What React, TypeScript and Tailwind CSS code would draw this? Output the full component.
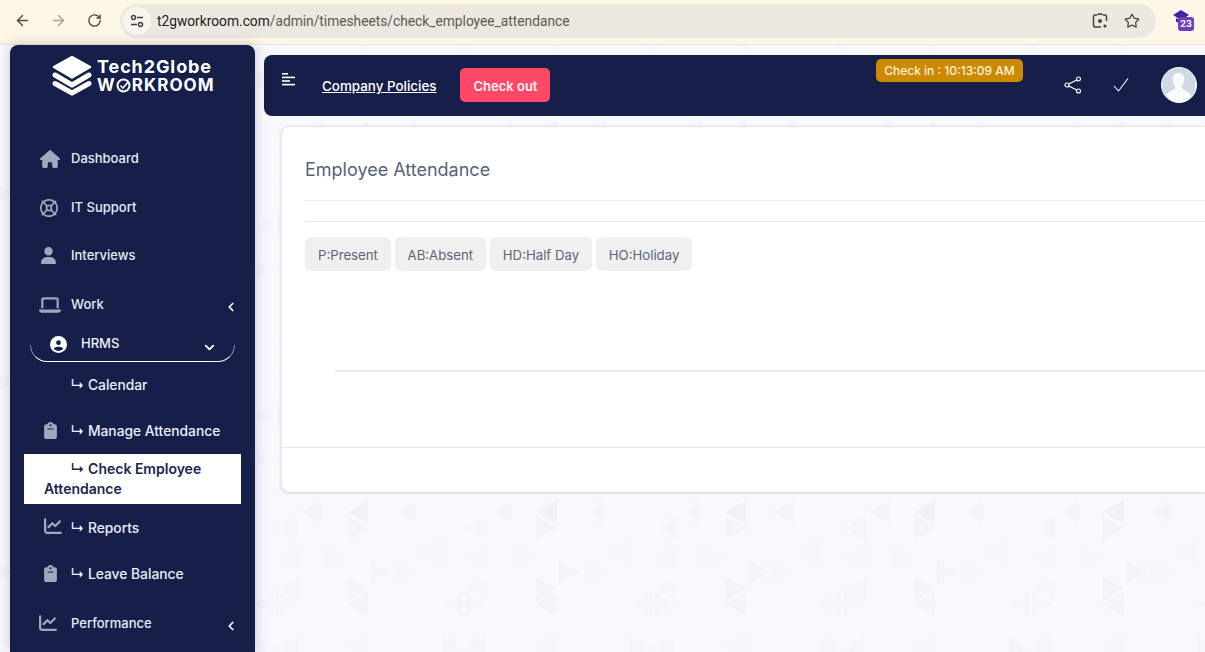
import React from "react";
import { ArrowLeft, ArrowRight, RotateCw, Star, ChevronLeft, ChevronDown } from "lucide-react";
import { FaHouse, FaUser, FaLaptop, FaCircleUser, FaClipboard, FaChartLine, FaRegLifeRing } from "react-icons/fa6";

const ICON = "text-[#a1a7bd]";

function Row({ icon, label, h, chevron }: { icon: React.ReactNode; label: string; h: string; chevron?: boolean }) {
  return (
    <div className={`flex items-center pl-[29px] pr-[17px] text-[13px] font-medium text-[#e8eaf2] ${h}`}>
      <span className={`flex w-[32px] shrink-0 items-center ${ICON}`}>{icon}</span>
      <span className="flex-1">{label}</span>
      {chevron && <ChevronLeft size={14} strokeWidth={3} className="mt-[5px] text-white" />}
    </div>
  );
}

function SubRow({ icon, label, h }: { icon?: React.ReactNode; label: string; h: string }) {
  return (
    <div className={`flex items-center pl-[33px] text-[13.8px] font-medium text-[#eceef5] ${h}`}>
      <span className={`flex w-[27.5px] shrink-0 items-center ${ICON}`}>{icon}</span>
      <span className="pt-[2px]">↳ {label}</span>
    </div>
  );
}

function Logo() {
  return (
    <div className="flex h-[89px] items-start pl-[42px] pt-[10px]">
      <svg width="40" height="41" viewBox="0 0 40 41" className="shrink-0">
        <path d="M20 2 L38 12 L20 22.5 L2 12 Z" fill="#fff" stroke="#fff" strokeWidth="2.5" strokeLinejoin="round" />
        <path d="M3 20 L20 30 L37 20" fill="none" stroke="#fff" strokeWidth="5" strokeLinecap="round" strokeLinejoin="round" />
        <path d="M3 28.5 L20 38 L37 28.5" fill="none" stroke="#fff" strokeWidth="5" strokeLinecap="round" strokeLinejoin="round" />
      </svg>
      <div className="ml-[5px] mt-[2px] font-bold text-white">
        <div className="text-[18px] leading-[20px] tracking-[0.9px]">Tech2Globe</div>
        <div className="flex items-center text-[17px] leading-[17px] tracking-[1.05px]">
          W
          <svg width="15" height="15" viewBox="0 0 15 15" className="mx-[0.5px]">
            <circle cx="7.5" cy="7.5" r="6" fill="none" stroke="#fff" strokeWidth="2" />
            <path d="M4.5 7.5 L7 10 L12.5 3.5" fill="none" stroke="#fff" strokeWidth="1.6" />
          </svg>
          RKROOM
        </div>
      </div>
    </div>
  );
}

function Sidebar() {
  return (
    <aside className="relative z-10 w-[245px] shrink-0 overflow-hidden rounded-t-[8px] bg-[#151f4a]">
      <Logo />
      <Row h="h-[49px]" label="Dashboard" icon={<FaHouse size={20} className="ml-[1px]" />} />
      <Row h="h-[49px]" label="IT Support" icon={<FaRegLifeRing size={18} className="ml-[1px]" />} />
      <Row h="h-[47px]" label="Interviews" icon={<FaUser size={17} className="ml-[1px]" />} />
      <Row h="h-[50px] pt-[1px]" label="Work" chevron icon={<FaLaptop size={22} />} />
      <div className="relative ml-[20px] flex h-[33px] w-[205px] items-center pb-[3px] pl-[20px] pr-[18px] text-[13px] font-medium text-[#f0f1f6]">
        <FaCircleUser size={17} className="text-white" />
        <span className="ml-[14px] flex-1">HRMS</span>
        <ChevronDown size={15} strokeWidth={3} className="mt-[6px] text-white" />
        <div className="absolute inset-x-0 bottom-0 h-[17px] rounded-b-[17px] border-x border-b border-white [border-left-color:#ffffff80] [border-right-color:#ffffff80]" />
      </div>
      <SubRow h="h-[45px]" label="Calendar" />
      <SubRow h="h-[47px]" label="Manage Attendance" icon={<FaClipboard size={17} className="-ml-[1px]" />} />
      <div className="ml-[14px] h-[50px] w-[217px] bg-white py-[5px] pl-[20px] pr-[10px] text-[14px] font-semibold leading-[20px] text-[#1c2650] [text-indent:26.5px]">
        ↳ Check Employee Attendance
      </div>
      <SubRow h="h-[47px]" label="Reports" icon={<FaChartLine size={18} className="ml-[1px] -mt-[3px]" />} />
      <SubRow h="h-[45px]" label="Leave Balance" icon={<FaClipboard size={17} className="-ml-[1px]" />} />
      <Row h="h-[55px]" label="Performance" chevron icon={<FaChartLine size={18} className="-mt-[2px]" />} />
    </aside>
  );
}

function Toolbar() {
  return (
    <header className="flex h-[45px] shrink-0 items-center border-b border-[#eee6d6] bg-[#fef7e8] pb-[3px]">
      <ArrowLeft size={17} strokeWidth={2} className="ml-[14px] text-[#4c4a42]" />
      <ArrowRight size={17} strokeWidth={2} className="ml-[19px] text-[#a5a298]" />
      <RotateCw size={15} strokeWidth={2.2} className="ml-[20px] text-[#4c4a42]" />
      <div className="ml-[18px] flex h-[34px] w-[1036px] items-center rounded-full bg-[#ece8e0]">
        <div className="ml-[3px] flex h-[28px] w-[28px] items-center justify-center rounded-full bg-[#f8f5ee]">
          <svg width="14" height="14" viewBox="0 0 14 14" fill="none" stroke="#3f3d38" strokeWidth="1.4">
            <circle cx="3.5" cy="3.5" r="2" />
            <path d="M7 3.5 H13 M1 10.5 H7" />
            <circle cx="10.5" cy="10.5" r="2" />
          </svg>
        </div>
        <span className="ml-[6px] mt-[2px] flex-1 font-['Roboto'] text-[13.75px] text-[#5b5a55]">
          <span className="text-[#22211e]">t2gworkroom.com</span>/admin/timesheets/check_employee_attendance
        </span>
        <svg width="16" height="16" viewBox="0 0 16 16" fill="none" stroke="#45433d" strokeWidth="1.5" className="mr-[16px]">
          <path d="M5 2 H3 Q1.5 2 1.5 3.5 V12 Q1.5 14 3 14 H5 M11 2 H13 Q14.5 2 14.5 3.5 V8 M9 14 H5" />
          <circle cx="8" cy="8" r="2" fill="#45433d" stroke="none" />
          <circle cx="13" cy="13" r="1.6" fill="#45433d" stroke="none" />
          <path d="M5.5 2 L6.5 1 H9.5 L10.5 2" />
        </svg>
        <Star size={16} strokeWidth={1.8} className="mr-[16px] text-[#45433d]" />
      </div>
      <div className="relative ml-[17px] h-[24px] w-[24px]">
        <svg width="16" height="14" viewBox="0 0 16 14" className="absolute left-0 top-[1px]">
          <path d="M8 0 L16 5 L8 10 L0 5 Z M3 8 L8 11 L13 8 V12 H3 Z" fill="#4b1fa3" />
        </svg>
        <span className="absolute left-[5px] top-[8px] flex h-[14px] w-[16px] items-center justify-center rounded-[3px] bg-[#6a3fc0] text-[9px] font-bold leading-none text-white">
          23
        </span>
      </div>
    </header>
  );
}

function Navbar() {
  return (
    <div className="flex h-[61px] items-start rounded-l-[8px] bg-[#151f4a]">
      <svg width="14" height="13" viewBox="0 0 14 13" className="ml-[18px] mt-[18px]" fill="#fff">
        <rect x="0" y="0" width="6" height="1.6" />
        <rect x="0" y="3.6" width="13" height="1.6" />
        <rect x="0" y="7.2" width="8" height="1.6" />
        <rect x="0" y="10.8" width="13" height="1.6" />
      </svg>
      <a className="ml-[26px] mt-[21px] text-[13.4px] font-medium leading-[20px] text-white underline">Company Policies</a>
      <button className="ml-[24px] mt-[13px] flex h-[34px] w-[90px] items-center justify-center rounded-[5px] bg-[#ff4766] pt-[3px] text-[13px] font-semibold text-[#fdf3f3]">
        Check out
      </button>
      <div className="flex-1" />
      <span className="mt-[4px] flex h-[23px] w-[147px] items-center justify-center rounded-[5px] bg-[#cc8a00] text-[12px] font-medium text-[#fdf3dc]">
        Check in : 10:13:09 AM
      </span>
      <svg width="18" height="18" viewBox="0 0 18 18" fill="none" stroke="#fff" strokeWidth="1.2" className="ml-[41px] mt-[21px]">
        <circle cx="14.5" cy="3" r="2" />
        <circle cx="3" cy="9" r="2" />
        <circle cx="14.5" cy="15" r="2" />
        <path d="M4.8 8 L12.7 4 M4.8 10 L12.7 14" />
      </svg>
      <svg width="18" height="18" viewBox="0 0 18 18" fill="none" stroke="#fff" strokeWidth="1.1" className="ml-[30px] mt-[21px]">
        <path d="M2 10 L6.5 15 L16 2.5" />
      </svg>
      <div className="ml-[31px] mr-[8px] mt-[12px] h-[36px] w-[36px] overflow-hidden rounded-full border-[1.5px] border-white bg-[#f1f3f8]">
        <svg width="33" height="33" viewBox="0 0 33 33">
          <rect width="33" height="33" fill="#d2d8e6" />
          <path d="M16.5 5 C12 5 10.5 8.5 10.8 12 C11 15 12.5 17 13.5 19 C13.5 22 5 23 4 28 V33 H29 V28 C28 23 19.5 22 19.5 19 C20.5 17 22 15 22.2 12 C22.5 8.5 21 5 16.5 5 Z" fill="#fbfbfd" />
        </svg>
      </div>
    </div>
  );
}

function Badge({ children }: { children: React.ReactNode }) {
  return (
    <span className="flex h-[34px] items-center rounded-[6px] bg-[#f0f0f1] px-[13px] pt-[4px] text-[13.2px] text-[#5c6676]">{children}</span>
  );
}

function Card() {
  return (
    <section className="ml-[17px] mt-[10px] flex h-[366px] flex-col rounded-l-[8px] border-l border-t border-[#e6e8f0] bg-white shadow-[0_1px_3px_rgba(80,90,120,0.25)]">
      <div className="ml-[23px] h-[74px] border-b border-[#eef0f5] pt-[30px] text-[18px] leading-[26px] text-[#55637a]">Employee Attendance</div>
      <div className="ml-[23px] mt-[20px] border-t border-[#e4e7f0] pt-[15px]">
        <div className="flex gap-[3.75px]">
          <Badge>P:Present</Badge>
          <Badge>AB:Absent</Badge>
          <Badge>HD:Half Day</Badge>
          <Badge>HO:Holiday</Badge>
        </div>
      </div>
      <div className="ml-[53px] mt-[99px] h-[2px] bg-[#e3e7f1]" />
      <div className="mt-[75px] flex-1 border-t border-[#e5e5ee]" />
    </section>
  );
}

function Pattern() {
  const L = "M21 0 V24 L0 12 Z";
  const R = "M0 0 L21 12 L0 24 Z";
  const items: [number, number, string, number][] = [
    [0, 0, L, 0.035], [45, 0, L, 0.05], [93, 0, L, 0.035],
    [165, 16, L, 0.025], [45, 16, R, 0.04],
    [68, 60, R, 0.035], [45, 77, R, 0.04], [165, 77, L, 0.02],
    [45, 92, L, 0.04], [140, 92, L, 0.028], [163, 92, R, 0.028],
    [140, 135, R, 0.018], [163, 135, L, 0.018], [45, 135, L, 0.012],
    [118, 40, L, 0.012], [165, 46, L, 0.012], [23, 46, R, 0.012], [93, 60, R, 0.012],
  ];
  return (
    <svg className="pointer-events-none absolute inset-0 h-full w-full" aria-hidden="true">
      <defs>
        <pattern id="tri" width="189" height="189" patternUnits="userSpaceOnUse" patternTransform="translate(113 77)">
          {items.map(([x, y, d, o], i) => (
            <path key={i} d={d} transform={`translate(${x} ${y})`} fill="#6b6f8a" opacity={o} />
          ))}
        </pattern>
      </defs>
      <rect width="100%" height="100%" fill="url(#tri)" />
    </svg>
  );
}

export default function App() {
  return (
    <div className="flex h-[652px] w-[1205px] flex-col overflow-hidden bg-[#f9f9fd] font-['Inter','DejaVu_Sans',sans-serif]">
      <Toolbar />
      <div className="relative flex min-h-0 flex-1 pl-[10px]">
        <Pattern />
        <div className="relative z-10 flex shrink-0 shadow-[0_0_12px_rgba(70,70,90,0.28)]">
          <Sidebar />
        </div>
        <main className="relative ml-[9px] min-w-0 flex-1 pt-[10px]">
          <Navbar />
          <Card />
        </main>
      </div>
    </div>
  );
}
